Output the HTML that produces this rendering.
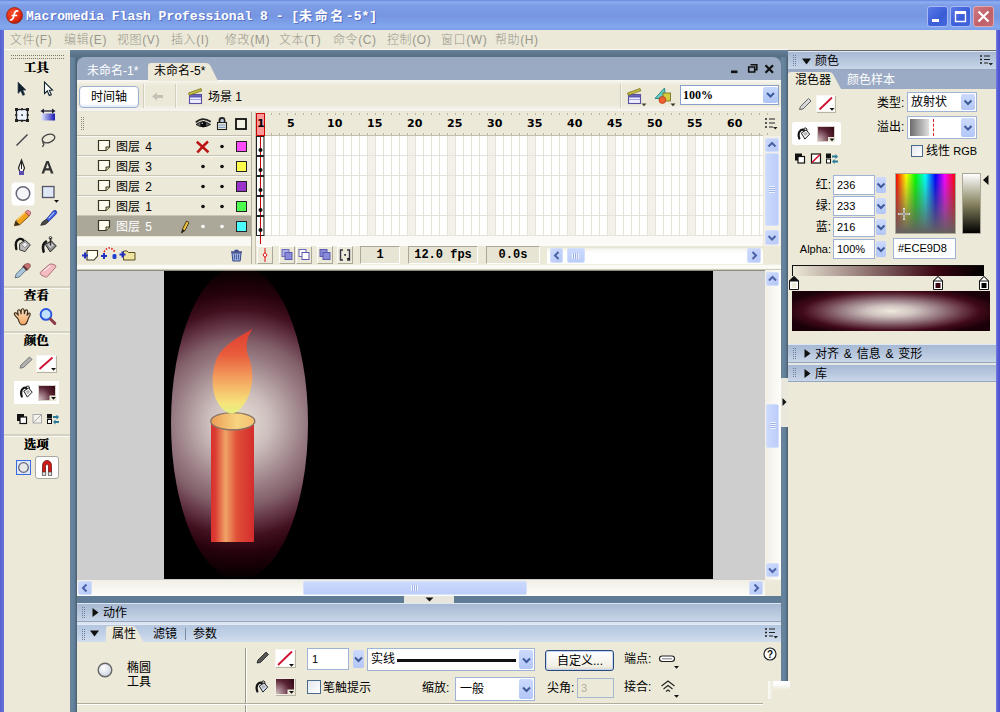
<!DOCTYPE html>
<html lang="zh">
<head>
<meta charset="utf-8">
<title>Macromedia Flash Professional 8</title>
<style>
*{box-sizing:border-box;margin:0;padding:0}
html,body{width:1000px;height:712px;overflow:hidden;background:#ece9d8}
body{position:relative;font-family:"Liberation Sans","Noto Sans CJK SC",sans-serif;font-size:12px;color:#000;line-height:1}
.a{position:absolute}
.t{position:absolute;white-space:nowrap;line-height:14px;height:14px}
svg{position:absolute;overflow:visible}
/* title */
#title{left:0;top:0;width:1000px;height:30px;background:linear-gradient(#6585dc 0,#8eaef3 2px,#7d9de6 5px,#7796e1 16px,#7c9fe8 22px,#82a8ee 27px,#7a9de8 30px)}
#ttext{left:26px;top:9px;color:#fff;font-family:"Liberation Mono","Noto Sans CJK SC",monospace;font-weight:bold;font-size:13px;line-height:16px;height:16px;text-shadow:1px 1px 0 #5570c4}
.wb{position:absolute;top:6px;width:21px;height:21px;border:1px solid #fff;border-radius:3px}
#menu{left:4px;top:30px;width:992px;height:20px;background:#ece9d8}
#menu span{position:absolute;top:3px;line-height:14px;color:#99978c;white-space:nowrap;letter-spacing:.6px;font-weight:300}
#lb{left:0;top:30px;width:4px;height:682px;background:linear-gradient(90deg,#5660cf,#6474da)}
#rb{left:996px;top:30px;width:4px;height:682px;background:linear-gradient(90deg,#7484e2 0,#5a60d6 1.500px,#4c50d0 4px)}
/* tools */
#tools{left:4px;top:50px;width:66px;height:662px;background:#ece9d8}
.th{position:absolute;left:0;width:66px;text-align:center;font-weight:bold;font-size:12.5px;line-height:14px;font-family:"Liberation Serif","Noto Serif CJK SC",serif;text-shadow:.6px 0 0 #000;letter-spacing:0;padding-right:2px}
.sep{position:absolute;left:6px;width:62px;height:3px;background:#d6d2c3;border-bottom:1px solid #f8f7f0}
/* doc frame */
#frame{left:70px;top:50px;width:718px;height:662px;background:linear-gradient(#6a849b 0,#5e788f 3px,#566f85 7px,#607b95 12px)}
#tabs{left:77px;top:57px;width:704px;height:24px;background:#9aaac3;border-radius:8px 8px 0 0}
#editbar{left:77px;top:80px;width:704px;height:32px;background:linear-gradient(#f9f8f3 0,#f1efe4 3px,#ece9d8 6px,#ece9d8 25px,#f3f1e8 28px,#f6f5ee 31px,#d9d5c6 32px)}
</style>
</head>
<body>
<div class="a" id="title"></div>
<div class="t" id="ttext">Macromedia Flash Professional 8 - [<span style="letter-spacing:2.6px">未命名</span>-5*]</div>
<div class="a" id="lb"></div><div class="a" id="rb"></div>
<div class="a" id="menu">
<span style="left:6px">文件(F)</span><span style="left:60px">编辑(E)</span><span style="left:113px">视图(V)</span><span style="left:167px">插入(I)</span><span style="left:221px">修改(M)</span><span style="left:275px">文本(T)</span><span style="left:329px">命令(C)</span><span style="left:383px">控制(O)</span><span style="left:437px">窗口(W)</span><span style="left:491px">帮助(H)</span>
</div>
<div class="a" id="tools"></div>
<div class="a" style="left:4px;top:49px;width:784px;height:1px;background:#fbfaf5"></div>
<div class="a" id="frame"></div>
<div class="a" style="left:70px;top:57px;width:7px;height:655px;background:linear-gradient(90deg,#6b8197 0,#67859f 30%,#607d98 65%,#4b5d6d 100%)"></div>
<div class="a" style="left:781px;top:57px;width:7px;height:655px;background:linear-gradient(90deg,#6b8197 0,#67859f 30%,#607d98 65%,#4b5d6d 100%)"></div>
<div class="a" id="tabs"></div>
<div class="a" id="editbar"></div>
<!-- TOOLS -->
<div class="a" style="left:11px;top:55px;width:54px;height:5px;background-image:radial-gradient(circle at 0.5px 0.5px,#7a7768 0.65px,transparent 0.8px);background-size:2px 3px"></div>
<div class="th" style="left:4px;top:61px">工具</div>
<div class="a" style="left:12px;top:183px;width:22px;height:22px;background:#fff;border-radius:3px;box-shadow:0 0 0 1px #f4f2ea"></div>
<svg width="70" height="500" viewBox="0 0 70 500" style="left:0;top:0">
<!-- arrow -->
<path d="M18 82 L18 93.5 L20.8 91 L22.8 95.5 L24.8 94.6 L22.8 90.2 L26 90 Z" fill="#10202c" stroke="#3a4a5a" stroke-width=".6"/>
<path d="M44.5 82 L44.5 93.5 L47.3 91 L49.3 95.5 L51.3 94.6 L49.3 90.2 L52.5 90 Z" fill="#fff" stroke="#10202c" stroke-width="1.1"/>
<!-- free transform -->
<rect x="16.5" y="109.5" width="11" height="11" fill="#eef4ff" stroke="#222" stroke-width="1.3"/>
<g fill="#222"><rect x="15" y="108" width="3" height="3"/><rect x="26" y="108" width="3" height="3"/><rect x="15" y="119" width="3" height="3"/><rect x="26" y="119" width="3" height="3"/><rect x="21.3" y="114.3" width="1.6" height="1.6"/><rect x="21" y="108.200" width="2" height="2"/><rect x="21" y="119.800" width="2" height="2"/><rect x="15.200" y="114" width="2" height="2"/><rect x="26.800" y="114" width="2" height="2"/></g>
<!-- fill transform -->
<defs><linearGradient id="gft" x1="0" x2="1"><stop offset="0" stop-color="#e8ecff"/><stop offset="1" stop-color="#1818b0"/></linearGradient>
<linearGradient id="gpen" x1="0" x2="1" y1="0" y2="1"><stop offset="0" stop-color="#e44"/><stop offset=".3" stop-color="#f5a623"/><stop offset="1" stop-color="#e88a10"/></linearGradient></defs>
<rect x="41" y="113.500" width="14" height="7" fill="url(#gft)"/>
<path d="M42 111 H54" stroke="#223" stroke-width="1.3"/><path d="M40.500 111 l3.500 -2.600 v5.200 z M55.500 111 l-3.500 -2.600 v5.200 z" fill="#223"/>
<!-- line -->
<path d="M16.5 145.5 L27.5 134.5" stroke="#444" stroke-width="1.5"/>
<!-- lasso -->
<ellipse cx="48.500" cy="138.500" rx="6.500" ry="4" fill="none" stroke="#444" stroke-width="1.3" transform="rotate(-18 48.500 138.500)"/>
<path d="M43.500 141 q-1.500 2 .5 3 l-1.500 3" fill="none" stroke="#444" stroke-width="1.300"/>
<!-- pen -->
<path d="M21.500 160 L18.500 168 L20 172 H23 L24.500 168 Z" fill="#fff" stroke="#222" stroke-width="1.200"/>
<path d="M21.500 161 V169" stroke="#222" stroke-width="1"/>
<rect x="19" y="171" width="5" height="4" fill="#5a4fb0"/>
<!-- A -->
<path d="M41.500 173.500 L46.300 161 H48.700 L53.500 173.500 H50.900 L49.900 170.500 H45.100 L44.100 173.500 Z M45.900 168.300 H49.100 L47.500 163.600 Z" fill="#333"/>
<!-- oval -->
<circle cx="23" cy="193.500" r="6.800" fill="#f4f6fa" stroke="#667" stroke-width="1.500"/>
<!-- rect -->
<rect x="42.500" y="186.500" width="11.500" height="11" fill="#dfe6f4" stroke="#556" stroke-width="1.300"/>
<path d="M54 200 h5 l-2.500 2.800 z" fill="#111"/>
<!-- pencil -->
<path d="M14.300 225.800 L15.800 220.800 L25.300 212 L29.300 216 L19.800 224.800 Z" fill="#f2a31c" stroke="#6a4210" stroke-width=".8"/>
<path d="M17 219.700 L26.200 211.200" stroke="#fbd27a" stroke-width="1.200"/>
<path d="M25.300 212 L27 210.600 Q29.500 210 30.600 212.200 Q30.800 214 29.300 216 Z" fill="#e88e92" stroke="#9a4048" stroke-width=".7"/>
<path d="M14.300 225.800 L15.800 220.800 L19.800 224.800 Z" fill="#3a3020"/>
<!-- brush -->
<path d="M46.300 219.300 L53 211.300 Q55 209.600 56.300 211 Q57.300 212.600 55.800 214.300 L48.600 221.600 Z" fill="#3858e0" stroke="#1c309a" stroke-width=".8"/>
<path d="M48.600 218.300 L54.300 212.300" stroke="#b8c8ff" stroke-width="1.100"/>
<path d="M40.700 225.300 Q41.500 221.300 46.300 219.300 L48.600 221.600 Q46.500 225.300 40.700 225.300 Z" fill="#4a4a4a" stroke="#2a2a2a" stroke-width=".7"/>
<!-- ink bottle -->
<path d="M16.300 249 Q14.300 241 19.300 239 Q22.300 238.300 23.600 240.600" fill="none" stroke="#151515" stroke-width="2.400" stroke-linecap="round"/>
<path d="M19.600 243.800 L25.300 240.300 L30.300 244.800 L25 251.600 L19.600 249.800 Z" fill="#b8b8b8" stroke="#3a3a3a" stroke-width="1"/>
<path d="M21.600 244.300 L25.100 242.100 L28.100 244.800 L24.600 247.600 Z" fill="#ececec" stroke="#666" stroke-width=".6"/>
<!-- paint bucket -->
<path d="M43.600 251.600 Q41.600 244.300 46 241.600" fill="none" stroke="#151515" stroke-width="2.600" stroke-linecap="round"/>
<path d="M45.300 244.300 L51.300 240.800 L56.300 246 L50.300 252 Z" fill="#8a8a8a" stroke="#2a2a2a" stroke-width="1"/>
<path d="M47.300 244.600 L51 242.500 L54 245.600 L50.300 248.300 Z" fill="#c4c4c4"/>
<path d="M50.500 245.500 V238" stroke="#2a2a2a" stroke-width="1.400"/><circle cx="50.500" cy="238" r="1.400" fill="none" stroke="#333" stroke-width=".9"/>
<!-- eyedropper -->
<path d="M15 277.800 L16.300 274 L23.600 266.600 L26.600 269.600 L19.300 277 Z" fill="#a9c8dc" stroke="#4a5a6a" stroke-width=".8"/>
<path d="M22.300 266.600 L26.800 271 L28 269.600 L23.600 265.300 Z" fill="#5a2a2a"/>
<path d="M24 265 L28.300 269.300 L30.300 266.600 Q30.800 264 28.600 263.500 Q26.300 263.300 24 265 Z" fill="#cc7474" stroke="#7a3a3a" stroke-width=".7"/>
<!-- eraser -->
<path d="M40.300 273.600 Q40 272.600 41.300 271.300 L49.300 264.600 Q50.600 263.600 52 264 L55.300 265.300 Q56.300 266 55.600 267.300 L47.600 276.300 Q46.600 277.500 45.300 277 L41.300 275 Q40.500 274.600 40.300 273.600 Z" fill="#f4bcc0" stroke="#a4646c" stroke-width=".9"/>
<path d="M44 271 L50 266" stroke="#fde4e6" stroke-width="1.200"/>
</svg>
<div class="sep" style="left:4px;top:286px;width:66px"></div>
<div class="th" style="left:4px;top:289px">查看</div>
<div class="sep" style="left:4px;top:331px;width:66px"></div>
<div class="th" style="left:4px;top:334px">颜色</div>
<div class="a" style="left:36px;top:355px;width:20px;height:17px;background:#fff;border:1px solid #f8f6ee;box-shadow:1px 1px 0 #b8b4a4"></div>
<div class="a" style="left:14px;top:381px;width:45px;height:23px;background:#fff"></div>
<div class="a" style="left:38px;top:385px;width:18px;height:16px;background:radial-gradient(circle at 0% 100%,#d4c4c4 0,#9a7480 30%,#5a2434 60%,#2e0612 100%);border:1px solid #d8d4c8"></div>
<div class="sep" style="left:4px;top:434px;width:66px"></div>
<div class="th" style="left:4px;top:438px">选项</div>
<div class="a" style="left:16px;top:460px;width:15px;height:15px;background:#dfe8f8;border:1px solid #3a6ae0"></div>
<div class="a" style="left:35px;top:456px;width:24px;height:23px;background:#fff;border:1px solid #a8a8a0;border-radius:3px"></div>
<svg width="70" height="200" viewBox="0 300 70 200" style="left:0;top:300px">
<!-- hand -->
<defs><linearGradient id="hnd" x1="0" y1="0" x2="0" y2="1"><stop offset="0" stop-color="#fde8cc"/><stop offset="1" stop-color="#f2a25c"/></linearGradient></defs>
<path d="M17.800 318.500 Q15 316 14.300 314 Q14.300 312.600 15.800 312.800 Q17.300 313.600 18.300 315.300 L17.600 311 Q17.800 309.600 19.200 309.800 Q20.300 310.300 20.500 311.600 L21.100 314 L21.300 310 Q21.600 308.600 23 308.800 Q24.100 309.300 24.200 310.600 L24.300 313.800 L25.300 310.600 Q25.900 309.600 27 310 Q27.800 310.600 27.600 311.800 L27 315.300 L28.600 313.300 Q29.600 312.800 30.100 313.600 Q30.400 314.600 29.800 315.600 Q28 319 27.300 321.500 Q26.600 324 24.600 324.800 H21.300 Q19.300 323.500 18.800 321 Q18.600 319.600 17.800 318.500 Z" fill="url(#hnd)" stroke="#3a2a1a" stroke-width="1.100" stroke-linejoin="round"/>
<!-- zoom -->
<circle cx="46" cy="314.400" r="5.400" fill="#bfe2ff" stroke="#2a56dc" stroke-width="1.900"/>
<path d="M50.600 319.200 L54.800 323.400" stroke="#8a3c48" stroke-width="3" stroke-linecap="round"/>
<!-- grey pencil -->
<path d="M20 368.200 L21 365 L29.500 357 L32 359.500 L23.500 367.500 Z" fill="#b0b0b0" stroke="#666" stroke-width=".8"/>
<!-- stroke swatch -->
<path d="M39.500 369 L52.500 357.500" stroke="#d01030" stroke-width="1.800"/>
<path d="M51 368 h5 l-2.500 2.800 z" fill="#111"/>
<!-- fill bucket -->
<path d="M21.8 396.5 Q19.8 390.5 23.5 388.1 Q25.5 387.1 26.5 388.5" fill="none" stroke="#151515" stroke-width="2.200" stroke-linecap="round"/><path d="M23.8 391.1 L28.6 387.9 L32.2 392.1 L27.4 397.1 Z" fill="#f4f4f4" stroke="#222" stroke-width="1"/><path d="M25.6 391.5 L28.4 389.7 L30.4 392.1 L27.6 394.1 Z" fill="#b8b8b8"/><path d="M25.8 389.1 Q26.2 385.1 28.4 385.9 Q29.8 386.7 29.4 388.9" fill="none" stroke="#222" stroke-width="1"/>
<rect x="49.500" y="395.500" width="7" height="5.500" fill="#ece9d8"/><path d="M51 397 h5 l-2.500 2.800 z" fill="#111"/>
<!-- small 3 -->
<rect x="17" y="414" width="7" height="7" fill="#111"/><rect x="20" y="417" width="6.500" height="6.500" fill="#fff" stroke="#111" stroke-width="1.200"/>
<rect x="33" y="414.500" width="8.500" height="8.500" fill="#f4f2ea" stroke="#aaa" stroke-width="1"/><path d="M33.500 422.500 L41 415" stroke="#aaa" stroke-width="1"/>
<rect x="47" y="414" width="5" height="4.500" fill="#111"/><rect x="47.500" y="419.500" width="4" height="4" fill="#fff" stroke="#111" stroke-width="1"/>
<path d="M53 416 h3.500 v-1.500 l2.500 2.500 -2.500 2.500 v-1.500 h-3.500 z M59 421 h-3.500 v-1.500 l-2.500 2.500 2.500 2.500 v-1.500 h3.500 z" fill="#2a7a9a"/>
<!-- options -->
<circle cx="23.500" cy="467.500" r="4.800" fill="#e8e8e8" stroke="#667" stroke-width="1.300"/>
<path d="M42.500 475 V466.500 Q42.500 460.500 47 460.500 Q51.500 460.500 51.500 466.500 V475 H48.500 V466.500 Q48.500 464 47 464 Q45.500 464 45.500 466.500 V475 Z" fill="#d01818" stroke="#701010" stroke-width=".8"/>
<rect x="42.200" y="472" width="3.600" height="3.500" fill="#ddd" stroke="#444" stroke-width=".6"/><rect x="48.200" y="472" width="3.600" height="3.500" fill="#ddd" stroke="#444" stroke-width=".6"/>
</svg>

<!--TL-->
<div class="t" style="left:87px;top:64px;color:#fff">未命名-1*</div>
<svg width="80" height="20" viewBox="146 62 80 20" style="left:146px;top:62px"><path d="M148 81 V66 Q148 63 151 63 H206 Q209 63 210.500 66 L218 81 Z" fill="#ece9d8"/></svg>
<div class="t" style="left:154px;top:64px">未命名-5*</div>
<svg width="50" height="14" viewBox="728 62 50 14" style="left:728px;top:62px"><rect x="731" y="70.500" width="6.500" height="2.600" fill="#111"/><path d="M750.500 64.800 h6.300 v5 h-2 M748.700 67 h6 v5 h-6 z" fill="none" stroke="#111" stroke-width="1.600"/><path d="M765.500 65.300 l7.500 7.500 m0 -7.500 l-7.500 7.500" stroke="#111" stroke-width="2.200"/></svg>
<div class="a" style="left:79px;top:86px;width:60px;height:22px;background:#fff;border:1px solid #9ab0d0;border-radius:4px;box-shadow:inset 0 -2px 2px #e4ecf8"></div>
<div class="t" style="left:91px;top:90px;font-size:12px">时间轴</div>
<div class="a" style="left:143px;top:84px;width:2px;height:24px;border-left:1px solid #d2cebe;border-right:1px solid #f7f6ef"></div>
<div class="a" style="left:175px;top:84px;width:2px;height:24px;border-left:1px solid #d2cebe;border-right:1px solid #f7f6ef"></div>
<div class="a" style="left:620px;top:84px;width:2px;height:24px;border-left:1px solid #d2cebe;border-right:1px solid #f7f6ef"></div>
<svg width="20" height="12" viewBox="150 90 20 12" style="left:150px;top:90px"><path d="M152 96.500 l5 -4 v2.500 h6 v3 h-6 v2.500 z" fill="#c4c0b4"/></svg>
<svg width="20" height="20" viewBox="186 86 20 20" style="left:186px;top:86px"><rect x="189.500" y="94.500" width="12" height="9" fill="#eeeeff" stroke="#5a4fa0" stroke-width="1.100"/><path d="M190 96.300 h11" stroke="#5c58b4" stroke-width="2.400"/><path d="M190 99.500 h11" stroke="#a8a4e0" stroke-width="1"/><path d="M188.500 93 L201 88.500 L201.800 90.800 L189.300 95.300 Z" fill="#c8c040" stroke="#7a7420" stroke-width=".8"/></svg>
<div class="t" style="left:208px;top:90px">场景 1</div>
<svg width="20" height="22" viewBox="626 86 20 22" style="left:626px;top:86px"><rect x="628.500" y="94.500" width="12" height="9" fill="#eeeeff" stroke="#5a4fa0" stroke-width="1.100"/><path d="M629 96.300 h11" stroke="#5c58b4" stroke-width="2.400"/><path d="M629 99.500 h11" stroke="#a8a4e0" stroke-width="1"/><path d="M627.500 93 L640 88.500 L640.800 90.800 L628.300 95.300 Z" fill="#c8c040" stroke="#7a7420" stroke-width=".8"/><path d="M641.500 103.500 h5 l-2.500 2.800 z" fill="#443"/></svg>
<svg width="24" height="22" viewBox="652 86 24 22" style="left:652px;top:86px"><path d="M655 98.500 L664.500 88 L665.500 98.500 Z" fill="#62ccc4" stroke="#2a8a88" stroke-width="1"/><rect x="663" y="93" width="7.500" height="8" fill="#d4cc40" stroke="#7a7420" stroke-width=".9"/><circle cx="662.400" cy="100" r="3.400" fill="#f06030" stroke="#b03a14" stroke-width=".8"/><path d="M670.500 103.500 h5 l-2.500 2.800 z" fill="#332"/></svg>
<div class="a" style="left:680px;top:85px;width:99px;height:20px;background:#fff;border:1px solid #8aa0c8"></div>
<div class="a" style="left:763px;top:87px;width:15px;height:16px;background:linear-gradient(#c8d8fc,#aec4f4);border-radius:2px"></div>
<svg width="15" height="16" viewBox="0 0 15 16" style="left:763px;top:87px"><path d="M4 6 l3.500 3.500 l3.500 -3.500" fill="none" stroke="#3a5a9a" stroke-width="2"/></svg>
<div class="t" style="left:683px;top:88px;font-weight:bold;font-size:11px;font-family:'Liberation Serif',serif;font-size:12px">100%</div>

<div class="a" style="left:77px;top:112px;width:704px;height:158px;background:#ece9d8"></div>
<div class="a" style="left:77px;top:135px;width:686px;height:1px;background:#c2beae"></div>
<div class="a" style="left:77px;top:136px;width:174px;height:20px;background:#ece9d8;border-bottom:1px solid #c9c5b4;border-top:1px solid #f8f7f0"></div>
<div class="t" style="left:116px;top:140px;color:#000;word-spacing:2px">图层 4</div>
<div class="a" style="left:236px;top:141px;width:11px;height:11px;background:#ff4cff;border:1px solid #222"></div>
<div class="a" style="left:77px;top:156px;width:174px;height:20px;background:#ece9d8;border-bottom:1px solid #c9c5b4;border-top:1px solid #f8f7f0"></div>
<div class="t" style="left:116px;top:160px;color:#000;word-spacing:2px">图层 3</div>
<div class="a" style="left:236px;top:161px;width:11px;height:11px;background:#ffff4c;border:1px solid #222"></div>
<div class="a" style="left:77px;top:176px;width:174px;height:20px;background:#ece9d8;border-bottom:1px solid #c9c5b4;border-top:1px solid #f8f7f0"></div>
<div class="t" style="left:116px;top:180px;color:#000;word-spacing:2px">图层 2</div>
<div class="a" style="left:236px;top:181px;width:11px;height:11px;background:#9933cc;border:1px solid #222"></div>
<div class="a" style="left:77px;top:196px;width:174px;height:20px;background:#ece9d8;border-bottom:1px solid #c9c5b4;border-top:1px solid #f8f7f0"></div>
<div class="t" style="left:116px;top:200px;color:#000;word-spacing:2px">图层 1</div>
<div class="a" style="left:236px;top:201px;width:11px;height:11px;background:#4cff4c;border:1px solid #222"></div>
<div class="a" style="left:77px;top:216px;width:174px;height:20px;background:#aca899;border-bottom:1px solid #aca899;border-top:1px solid #aca899"></div>
<div class="t" style="left:116px;top:220px;color:#fff;word-spacing:2px">图层 5</div>
<div class="a" style="left:236px;top:221px;width:11px;height:11px;background:#4cffff;border:1px solid #222"></div>
<div class="a" style="left:81px;top:117px;width:4px;height:14px;background-image:radial-gradient(circle at 0.5px 0.5px,#8a8778 0.6px,transparent 0.7px);background-size:2px 2px"></div>
<div class="a" style="left:251px;top:112px;width:5px;height:158px;background:#ece9d8;border-left:1px solid #b4b0a0;border-right:1px solid #c8c4b4"></div>
<div class="a" style="left:256px;top:136px;width:507px;height:100px;background-color:#fff;background-image:linear-gradient(90deg,rgba(0,0,0,0) 0,rgba(0,0,0,0) 7px,#e5e2d9 7px,#e5e2d9 8px),linear-gradient(transparent 0,transparent 19px,#e5e2d9 19px,#e5e2d9 20px),linear-gradient(90deg,transparent 0,transparent 32px,#f4f1ea 32px,#f4f1ea 40px);background-size:8px 20px,8px 20px,40px 20px;background-blend-mode:normal"></div>
<div class="a" style="left:256px;top:236px;width:507px;height:10px;background:#fbfaf6"></div>
<div class="a" style="left:77px;top:237px;width:174px;height:9px;background:#faf8f3"></div>
<!--/TL-->
<!--TL2-->
<svg width="703" height="160" viewBox="77 112 703 160" style="left:77px;top:112px">
<path d="M196 124.500 Q203 119 210.500 124.500 Q203 129 196 124.500 Z" fill="#6a6a6a" stroke="#1a1a1a" stroke-width="1"/><circle cx="203.300" cy="124.300" r="3" fill="#0a0a0a"/><circle cx="202.300" cy="123.300" r=".8" fill="#ccc"/><path d="M195.800 122.300 Q202.500 116 210.800 121.800" fill="none" stroke="#222" stroke-width="1.700"/>
<path d="M219.500 123 V120.500 Q219.500 118 222 118 Q224.500 118 224.500 120.500 V123" fill="none" stroke="#222" stroke-width="1.900"/><rect x="217.500" y="122.500" width="9" height="7" fill="#eef0dc" stroke="#222" stroke-width="1.100"/><path d="M218.500 125 h7 M218.500 127.300 h7" stroke="#6a8cc4" stroke-width="1"/><rect x="221" y="119.300" width="2.600" height="2.400" fill="#b8c8e8"/>
<rect x="236" y="119" width="10" height="10" fill="#f4f2e6" stroke="#111" stroke-width="1.800"/>
<path d="M98.500 140.5 H109.500 V147 L106 150.5 H98.500 Z" fill="#fffef0" stroke="#3a3420" stroke-width="1.200"/><path d="M109.500 147 H106 V150.5" fill="#e8e0a8" stroke="#3a3420" stroke-width="1"/>
<path d="M196.800 141.800 L208.500 152.300 M208 141.500 Q202 147 197.300 152.500" stroke="#bb1414" stroke-width="2.500" fill="none"/>
<circle cx="222" cy="146.5" r="1.800" fill="#111"/>
<path d="M98.500 160.5 H109.500 V167 L106 170.5 H98.500 Z" fill="#fffef0" stroke="#3a3420" stroke-width="1.200"/><path d="M109.500 167 H106 V170.5" fill="#e8e0a8" stroke="#3a3420" stroke-width="1"/>
<circle cx="203" cy="166.5" r="1.800" fill="#111"/>
<circle cx="222" cy="166.5" r="1.800" fill="#111"/>
<path d="M98.500 180.5 H109.500 V187 L106 190.5 H98.500 Z" fill="#fffef0" stroke="#3a3420" stroke-width="1.200"/><path d="M109.500 187 H106 V190.5" fill="#e8e0a8" stroke="#3a3420" stroke-width="1"/>
<circle cx="203" cy="186.5" r="1.800" fill="#111"/>
<circle cx="222" cy="186.5" r="1.800" fill="#111"/>
<path d="M98.500 200.5 H109.500 V207 L106 210.5 H98.500 Z" fill="#fffef0" stroke="#3a3420" stroke-width="1.200"/><path d="M109.500 207 H106 V210.5" fill="#e8e0a8" stroke="#3a3420" stroke-width="1"/>
<circle cx="203" cy="206.5" r="1.800" fill="#111"/>
<circle cx="222" cy="206.5" r="1.800" fill="#111"/>
<path d="M98.500 220.5 H109.500 V227 L106 230.5 H98.500 Z" fill="#fffef0" stroke="#3a3420" stroke-width="1.200"/><path d="M109.500 227 H106 V230.5" fill="#e8e0a8" stroke="#3a3420" stroke-width="1"/>
<circle cx="203" cy="226.5" r="1.800" fill="#fff"/>
<circle cx="222" cy="226.5" r="1.800" fill="#fff"/>
<path d="M181.500 233 L182.500 229 L186.500 221 L189 222.5 L185 230.5 Z" fill="#f0c040" stroke="#3a3010" stroke-width=".9"/><path d="M181.500 233 L182.500 229 L185 230.5 Z" fill="#222"/>
<path d="M263.5 113 v2 M263.5 133 v2" stroke="#b8b4a4" stroke-width="1"/>
<path d="M271.5 113 v2 M271.5 133 v2" stroke="#b8b4a4" stroke-width="1"/>
<path d="M279.5 113 v2 M279.5 133 v2" stroke="#b8b4a4" stroke-width="1"/>
<path d="M287.5 113 v2 M287.5 133 v2" stroke="#b8b4a4" stroke-width="1"/>
<path d="M295.5 113 v2 M295.5 133 v2" stroke="#b8b4a4" stroke-width="1"/>
<path d="M303.5 113 v2 M303.5 133 v2" stroke="#b8b4a4" stroke-width="1"/>
<path d="M311.5 113 v2 M311.5 133 v2" stroke="#b8b4a4" stroke-width="1"/>
<path d="M319.5 113 v2 M319.5 133 v2" stroke="#b8b4a4" stroke-width="1"/>
<path d="M327.5 113 v2 M327.5 133 v2" stroke="#b8b4a4" stroke-width="1"/>
<path d="M335.5 113 v2 M335.5 133 v2" stroke="#b8b4a4" stroke-width="1"/>
<path d="M343.5 113 v2 M343.5 133 v2" stroke="#b8b4a4" stroke-width="1"/>
<path d="M351.5 113 v2 M351.5 133 v2" stroke="#b8b4a4" stroke-width="1"/>
<path d="M359.5 113 v2 M359.5 133 v2" stroke="#b8b4a4" stroke-width="1"/>
<path d="M367.5 113 v2 M367.5 133 v2" stroke="#b8b4a4" stroke-width="1"/>
<path d="M375.5 113 v2 M375.5 133 v2" stroke="#b8b4a4" stroke-width="1"/>
<path d="M383.5 113 v2 M383.5 133 v2" stroke="#b8b4a4" stroke-width="1"/>
<path d="M391.5 113 v2 M391.5 133 v2" stroke="#b8b4a4" stroke-width="1"/>
<path d="M399.5 113 v2 M399.5 133 v2" stroke="#b8b4a4" stroke-width="1"/>
<path d="M407.5 113 v2 M407.5 133 v2" stroke="#b8b4a4" stroke-width="1"/>
<path d="M415.5 113 v2 M415.5 133 v2" stroke="#b8b4a4" stroke-width="1"/>
<path d="M423.5 113 v2 M423.5 133 v2" stroke="#b8b4a4" stroke-width="1"/>
<path d="M431.5 113 v2 M431.5 133 v2" stroke="#b8b4a4" stroke-width="1"/>
<path d="M439.5 113 v2 M439.5 133 v2" stroke="#b8b4a4" stroke-width="1"/>
<path d="M447.5 113 v2 M447.5 133 v2" stroke="#b8b4a4" stroke-width="1"/>
<path d="M455.5 113 v2 M455.5 133 v2" stroke="#b8b4a4" stroke-width="1"/>
<path d="M463.5 113 v2 M463.5 133 v2" stroke="#b8b4a4" stroke-width="1"/>
<path d="M471.5 113 v2 M471.5 133 v2" stroke="#b8b4a4" stroke-width="1"/>
<path d="M479.5 113 v2 M479.5 133 v2" stroke="#b8b4a4" stroke-width="1"/>
<path d="M487.5 113 v2 M487.5 133 v2" stroke="#b8b4a4" stroke-width="1"/>
<path d="M495.5 113 v2 M495.5 133 v2" stroke="#b8b4a4" stroke-width="1"/>
<path d="M503.5 113 v2 M503.5 133 v2" stroke="#b8b4a4" stroke-width="1"/>
<path d="M511.5 113 v2 M511.5 133 v2" stroke="#b8b4a4" stroke-width="1"/>
<path d="M519.5 113 v2 M519.5 133 v2" stroke="#b8b4a4" stroke-width="1"/>
<path d="M527.5 113 v2 M527.5 133 v2" stroke="#b8b4a4" stroke-width="1"/>
<path d="M535.5 113 v2 M535.5 133 v2" stroke="#b8b4a4" stroke-width="1"/>
<path d="M543.5 113 v2 M543.5 133 v2" stroke="#b8b4a4" stroke-width="1"/>
<path d="M551.5 113 v2 M551.5 133 v2" stroke="#b8b4a4" stroke-width="1"/>
<path d="M559.5 113 v2 M559.5 133 v2" stroke="#b8b4a4" stroke-width="1"/>
<path d="M567.5 113 v2 M567.5 133 v2" stroke="#b8b4a4" stroke-width="1"/>
<path d="M575.5 113 v2 M575.5 133 v2" stroke="#b8b4a4" stroke-width="1"/>
<path d="M583.5 113 v2 M583.5 133 v2" stroke="#b8b4a4" stroke-width="1"/>
<path d="M591.5 113 v2 M591.5 133 v2" stroke="#b8b4a4" stroke-width="1"/>
<path d="M599.5 113 v2 M599.5 133 v2" stroke="#b8b4a4" stroke-width="1"/>
<path d="M607.5 113 v2 M607.5 133 v2" stroke="#b8b4a4" stroke-width="1"/>
<path d="M615.5 113 v2 M615.5 133 v2" stroke="#b8b4a4" stroke-width="1"/>
<path d="M623.5 113 v2 M623.5 133 v2" stroke="#b8b4a4" stroke-width="1"/>
<path d="M631.5 113 v2 M631.5 133 v2" stroke="#b8b4a4" stroke-width="1"/>
<path d="M639.5 113 v2 M639.5 133 v2" stroke="#b8b4a4" stroke-width="1"/>
<path d="M647.5 113 v2 M647.5 133 v2" stroke="#b8b4a4" stroke-width="1"/>
<path d="M655.5 113 v2 M655.5 133 v2" stroke="#b8b4a4" stroke-width="1"/>
<path d="M663.5 113 v2 M663.5 133 v2" stroke="#b8b4a4" stroke-width="1"/>
<path d="M671.5 113 v2 M671.5 133 v2" stroke="#b8b4a4" stroke-width="1"/>
<path d="M679.5 113 v2 M679.5 133 v2" stroke="#b8b4a4" stroke-width="1"/>
<path d="M687.5 113 v2 M687.5 133 v2" stroke="#b8b4a4" stroke-width="1"/>
<path d="M695.5 113 v2 M695.5 133 v2" stroke="#b8b4a4" stroke-width="1"/>
<path d="M703.5 113 v2 M703.5 133 v2" stroke="#b8b4a4" stroke-width="1"/>
<path d="M711.5 113 v2 M711.5 133 v2" stroke="#b8b4a4" stroke-width="1"/>
<path d="M719.5 113 v2 M719.5 133 v2" stroke="#b8b4a4" stroke-width="1"/>
<path d="M727.5 113 v2 M727.5 133 v2" stroke="#b8b4a4" stroke-width="1"/>
<path d="M735.5 113 v2 M735.5 133 v2" stroke="#b8b4a4" stroke-width="1"/>
<path d="M743.5 113 v2 M743.5 133 v2" stroke="#b8b4a4" stroke-width="1"/>
<path d="M751.5 113 v2 M751.5 133 v2" stroke="#b8b4a4" stroke-width="1"/>
<path d="M759.5 113 v2 M759.5 133 v2" stroke="#b8b4a4" stroke-width="1"/>
<path d="M767.5 113 v2 M767.5 133 v2" stroke="#b8b4a4" stroke-width="1"/>
<rect x="256.500" y="113.500" width="8" height="22" fill="#ff9999" stroke="#cc0000" stroke-width="1"/>
<path d="M260.500 136 V244" stroke="#cc0000" stroke-width="1"/>
<rect x="256.500" y="136.5" width="7.500" height="19" fill="none" stroke="#222" stroke-width="1"/>
<circle cx="260.500" cy="150" r="2" fill="#111"/>
<rect x="256.500" y="156.5" width="7.500" height="19" fill="none" stroke="#222" stroke-width="1"/>
<circle cx="260.500" cy="170" r="2" fill="#111"/>
<rect x="256.500" y="176.5" width="7.500" height="19" fill="none" stroke="#222" stroke-width="1"/>
<circle cx="260.500" cy="190" r="2" fill="#111"/>
<rect x="256.500" y="196.5" width="7.500" height="19" fill="none" stroke="#222" stroke-width="1"/>
<circle cx="260.500" cy="210" r="2" fill="#111"/>
<rect x="256.500" y="216.5" width="7.500" height="19" fill="none" stroke="#222" stroke-width="1"/>
<circle cx="260.500" cy="230" r="2" fill="#111"/>
<path d="M765 119 h2 M765 123 h2 M765 127 h2" stroke="#222" stroke-width="1.600"/><path d="M769 119 h6 M769 123 h6 M769 127 h4" stroke="#222" stroke-width="1.200"/><path d="M773 127 h4.500 l-2.250 2.500 z" fill="#222"/>
<path d="M87 250.500 H97.500 V256 L94 260 H87 Z" fill="#fffef0" stroke="#3a3420" stroke-width="1.100"/><path d="M82 255.500 h6 M85 252.500 v6" stroke="#2030c0" stroke-width="2"/>
<path d="M104 252 Q109 244 115 252" fill="none" stroke="#e01010" stroke-width="1.600" stroke-dasharray="1.500 1.500"/><path d="M101 256 h6 M104 253 v6" stroke="#2030c0" stroke-width="2"/><rect x="112.500" y="254" width="4" height="5" rx="1.500" fill="#2040d0"/>
<path d="M123.500 260 V251 H127 L128.500 252.500 H135 V260 Z" fill="#f0e4a0" stroke="#5a5020" stroke-width="1"/><path d="M119.500 254.500 h6 M122.500 251.500 v6" stroke="#2030c0" stroke-width="2"/>
<path d="M232 253 h9 l-.8 8 h-7.400 z" fill="#9ab0e0" stroke="#3a4a8a" stroke-width="1"/><path d="M231 252 h11 M234.500 250.500 h4" stroke="#3a4a8a" stroke-width="1.400"/><path d="M234.500 254.500 v5 M236.500 254.500 v5 M238.500 254.500 v5" stroke="#3a4a8a" stroke-width=".8"/>
</svg>
<div class="t" style="left:287px;top:117px;font-weight:bold;font-size:11px;font-family:'DejaVu Sans','Liberation Sans',sans-serif">5</div>
<div class="t" style="left:327px;top:117px;font-weight:bold;font-size:11px;font-family:'DejaVu Sans','Liberation Sans',sans-serif">10</div>
<div class="t" style="left:367px;top:117px;font-weight:bold;font-size:11px;font-family:'DejaVu Sans','Liberation Sans',sans-serif">15</div>
<div class="t" style="left:407px;top:117px;font-weight:bold;font-size:11px;font-family:'DejaVu Sans','Liberation Sans',sans-serif">20</div>
<div class="t" style="left:447px;top:117px;font-weight:bold;font-size:11px;font-family:'DejaVu Sans','Liberation Sans',sans-serif">25</div>
<div class="t" style="left:487px;top:117px;font-weight:bold;font-size:11px;font-family:'DejaVu Sans','Liberation Sans',sans-serif">30</div>
<div class="t" style="left:527px;top:117px;font-weight:bold;font-size:11px;font-family:'DejaVu Sans','Liberation Sans',sans-serif">35</div>
<div class="t" style="left:567px;top:117px;font-weight:bold;font-size:11px;font-family:'DejaVu Sans','Liberation Sans',sans-serif">40</div>
<div class="t" style="left:607px;top:117px;font-weight:bold;font-size:11px;font-family:'DejaVu Sans','Liberation Sans',sans-serif">45</div>
<div class="t" style="left:647px;top:117px;font-weight:bold;font-size:11px;font-family:'DejaVu Sans','Liberation Sans',sans-serif">50</div>
<div class="t" style="left:687px;top:117px;font-weight:bold;font-size:11px;font-family:'DejaVu Sans','Liberation Sans',sans-serif">55</div>
<div class="t" style="left:727px;top:117px;font-weight:bold;font-size:11px;font-family:'DejaVu Sans','Liberation Sans',sans-serif">60</div>
<div class="t" style="left:257px;top:117px;font-weight:bold;font-size:11px;font-family:'DejaVu Sans',sans-serif">1</div>
<div class="a" style="left:257px;top:246px;width:16px;height:18px;border:1px solid #fff;border-right-color:#aca899;border-bottom-color:#aca899;background:#ece9d8"></div>
<div class="a" style="left:279px;top:246px;width:16px;height:18px;border:1px solid #fff;border-right-color:#aca899;border-bottom-color:#aca899;background:#ece9d8"></div>
<div class="a" style="left:296px;top:246px;width:16px;height:18px;border:1px solid #fff;border-right-color:#aca899;border-bottom-color:#aca899;background:#ece9d8"></div>
<div class="a" style="left:317px;top:246px;width:16px;height:18px;border:1px solid #fff;border-right-color:#aca899;border-bottom-color:#aca899;background:#ece9d8"></div>
<div class="a" style="left:337px;top:246px;width:16px;height:18px;border:1px solid #fff;border-right-color:#aca899;border-bottom-color:#aca899;background:#ece9d8"></div>
<div class="a" style="left:360px;top:246px;width:40px;height:18px;border:1px solid #aca899;border-right-color:#fff;border-bottom-color:#fff;background:#e7e4d4;text-align:center;font-weight:bold;font-size:12px;line-height:16px;font-family:'Liberation Mono',monospace">1</div>
<div class="a" style="left:408px;top:246px;width:70px;height:18px;border:1px solid #aca899;border-right-color:#fff;border-bottom-color:#fff;background:#e7e4d4;text-align:center;font-weight:bold;font-size:12px;line-height:16px;font-family:'Liberation Mono',monospace">12.0 fps</div>
<div class="a" style="left:486px;top:246px;width:54px;height:18px;border:1px solid #aca899;border-right-color:#fff;border-bottom-color:#fff;background:#e7e4d4;text-align:center;font-weight:bold;font-size:12px;line-height:16px;font-family:'Liberation Mono',monospace">0.0s</div>
<svg width="100" height="18" viewBox="257 246 100 18" style="left:257px;top:246px"><path d="M265 248 v14" stroke="#e01010" stroke-width="1"/><path d="M265 252.500 l2 2.500 -2 2.500 -2 -2.500 z" fill="#fff" stroke="#e01010" stroke-width="1"/><rect x="282" y="249.500" width="7" height="7" fill="#b0b0e8" stroke="#6a6ab8"/><rect x="285" y="252.500" width="7" height="7" fill="#8a8ad8" stroke="#5a5ab0"/><rect x="299" y="249.500" width="7" height="7" fill="#fff" stroke="#6a6ab8"/><rect x="302" y="252.500" width="7" height="7" fill="#fff" stroke="#5a5ab0"/><rect x="320" y="249.500" width="7" height="7" fill="#8a8ad8" stroke="#5a5ab0"/><rect x="323" y="252.500" width="7" height="7" fill="#8a8ad8" stroke="#5a5ab0"/><path d="M343 250 h-2.500 v10 h2.500 M347 250 h2.500 v10 h-2.500" fill="none" stroke="#334" stroke-width="1.400"/><rect x="344.200" y="254" width="1.800" height="1.800" fill="#334"/><path d="M346.500 258 h3 v2.500 z" fill="#111"/></svg>
<!--/TL2-->
<!--STAGE-->
<div class="a" style="left:764px;top:136px;width:17px;height:110px;background:#f3f1e7"></div>
<div class="a" style="left:765px;top:138px;width:14px;height:14px;background:linear-gradient(135deg,#cddafc,#b6c8f6);border:1px solid #d2defc;border-radius:2px"></div>
<svg width="14" height="14" viewBox="765 138 14 14" style="left:765px;top:138px"><path d="M768.5 146.5 l3.500 -3.500 l3.500 3.500" fill="none" stroke="#4a62a8" stroke-width="2"/></svg>
<div class="a" style="left:765px;top:153px;width:14px;height:73px;background:linear-gradient(90deg,#cbd9fd,#bccdf9);border:1px solid #d4e0fc;border-radius:2px"></div>
<div class="a" style="left:769.0px;top:185.5px;width:6px;height:7px;background:repeating-linear-gradient(#eef3ff 0,#eef3ff 1px,#9fb4e8 1px,#9fb4e8 2px)"></div>
<div class="a" style="left:765px;top:230px;width:14px;height:15px;background:linear-gradient(135deg,#cddafc,#b6c8f6);border:1px solid #d2defc;border-radius:2px"></div>
<svg width="14" height="15" viewBox="765 230 14 15" style="left:765px;top:230px"><path d="M768.5 236.0 l3.500 3.500 l3.500 -3.500" fill="none" stroke="#4a62a8" stroke-width="2"/></svg>
<div class="a" style="left:547px;top:247px;width:216px;height:17px;background:linear-gradient(#e2dfd2 0,#f6f5ee 2px,#fff 6px,#fff 100%)"></div>
<div class="a" style="left:550px;top:248px;width:13px;height:15px;background:linear-gradient(135deg,#cddafc,#b6c8f6);border:1px solid #d2defc;border-radius:2px"></div>
<svg width="14" height="15" viewBox="548 248 14 15" style="left:549.500px;top:248px"><path d="M556.5 252.0 l-3.500 3.500 l3.500 3.500" fill="none" stroke="#4a62a8" stroke-width="2"/></svg>
<div class="a" style="left:567px;top:248px;width:18px;height:15px;background:linear-gradient(180deg,#cbd9fd,#bccdf9);border:1px solid #d4e0fc;border-radius:2px"></div>
<div class="a" style="left:572.0px;top:252.5px;width:7px;height:6px;background:repeating-linear-gradient(90deg,#eef3ff 0,#eef3ff 1px,#9fb4e8 1px,#9fb4e8 2px)"></div>
<div class="a" style="left:747px;top:248px;width:14px;height:15px;background:linear-gradient(135deg,#cddafc,#b6c8f6);border:1px solid #d2defc;border-radius:2px"></div>
<svg width="14" height="15" viewBox="747 248 14 15" style="left:747px;top:248px"><path d="M752.5 252.0 l3.500 3.500 l-3.500 3.500" fill="none" stroke="#4a62a8" stroke-width="2"/></svg>
<div class="a" style="left:77px;top:264px;width:704px;height:7px;background:linear-gradient(#ece9d8 0,#fbfaf4 1.500px,#fdfcf7 4px,#f4f2e8 5px,#a8a596 6px,#77756a 7px)"></div>
<div class="a" style="left:77px;top:271px;width:688px;height:309px;background:#cecece"></div>
<div class="a" style="left:164px;top:271px;width:549px;height:308px;background:#000;overflow:hidden"></div>
<svg width="549" height="308" viewBox="164 271 549 308" style="left:164px;top:271px;overflow:hidden">
<defs>
<radialGradient id="glow" gradientUnits="userSpaceOnUse" cx="239.500" cy="423" r="158"><stop offset="0" stop-color="#e9e2d9"/><stop offset=".2" stop-color="#cbbdbb"/><stop offset=".43" stop-color="#957880"/><stop offset=".52" stop-color="#82606a"/><stop offset=".62" stop-color="#643646"/><stop offset=".72" stop-color="#41101f"/><stop offset=".82" stop-color="#26020c"/><stop offset=".92" stop-color="#120004"/><stop offset="1" stop-color="#000"/></radialGradient>
<linearGradient id="body" x1="0" x2="1"><stop offset="0" stop-color="#d83030"/><stop offset=".1" stop-color="#dc3c32"/><stop offset=".34" stop-color="#f0a468"/><stop offset=".6" stop-color="#e05038"/><stop offset="1" stop-color="#d42c2c"/></linearGradient>
<linearGradient id="flame" x1="0" y1="1" x2="0" y2="0"><stop offset="0" stop-color="#e4f080"/><stop offset=".12" stop-color="#f6e47a"/><stop offset=".4" stop-color="#f4a460"/><stop offset=".7" stop-color="#e85c3c"/><stop offset="1" stop-color="#de3c30"/></linearGradient>
<linearGradient id="ctop" x1="0" x2="1"><stop offset="0" stop-color="#ee9c56"/><stop offset=".6" stop-color="#f6d480"/><stop offset="1" stop-color="#f4c070"/></linearGradient>
</defs>
<ellipse cx="239.500" cy="423" rx="68.500" ry="157" fill="url(#glow)"/>
<rect x="211" y="421" width="43" height="121" fill="url(#body)"/>
<ellipse cx="232.800" cy="421.200" rx="22" ry="8.600" fill="url(#ctop)" stroke="#8a7466" stroke-width="1.400"/>
<path d="M252.500 329 C240 336 223 345 217 358 C211 372 211 392 218 403 C223 411 228 413.500 232 413.500 C238 413.500 245 405 249 395 C254 382 253 368 249 358 C245 348 246 338 252.500 329 Z" fill="url(#flame)"/>
</svg>
<div class="a" style="left:765px;top:270px;width:16px;height:310px;background:linear-gradient(90deg,#f1efe5,#fdfdfa)"></div>
<div class="a" style="left:766px;top:272px;width:13px;height:14px;background:linear-gradient(135deg,#cddafc,#b6c8f6);border:1px solid #d2defc;border-radius:2px"></div>
<svg width="13" height="14" viewBox="766 272 13 14" style="left:766px;top:272px"><path d="M769.0 280.5 l3.500 -3.500 l3.500 3.500" fill="none" stroke="#4a62a8" stroke-width="2"/></svg>
<div class="a" style="left:766px;top:404px;width:13px;height:44px;background:linear-gradient(90deg,#cbd9fd,#bccdf9);border:1px solid #d4e0fc;border-radius:2px"></div>
<div class="a" style="left:769.5px;top:422.0px;width:6px;height:7px;background:repeating-linear-gradient(#eef3ff 0,#eef3ff 1px,#9fb4e8 1px,#9fb4e8 2px)"></div>
<div class="a" style="left:766px;top:563px;width:13px;height:14px;background:linear-gradient(135deg,#cddafc,#b6c8f6);border:1px solid #d2defc;border-radius:2px"></div>
<svg width="13" height="14" viewBox="766 563 13 14" style="left:766px;top:563px"><path d="M769.0 568.5 l3.500 3.500 l3.500 -3.500" fill="none" stroke="#4a62a8" stroke-width="2"/></svg>
<div class="a" style="left:77px;top:580px;width:688px;height:16px;background:linear-gradient(#f1efe5,#fdfdfa)"></div>
<div class="a" style="left:765px;top:580px;width:16px;height:16px;background:#ece9d8"></div>
<div class="a" style="left:78px;top:581px;width:14px;height:14px;background:linear-gradient(135deg,#cddafc,#b6c8f6);border:1px solid #d2defc;border-radius:2px"></div>
<svg width="14" height="14" viewBox="78 581 14 14" style="left:78px;top:581px"><path d="M86.5 584.5 l-3.500 3.500 l3.500 3.500" fill="none" stroke="#4a62a8" stroke-width="2"/></svg>
<div class="a" style="left:303px;top:581px;width:224px;height:14px;background:linear-gradient(180deg,#cbd9fd,#bccdf9);border:1px solid #d4e0fc;border-radius:2px"></div>
<div class="a" style="left:411.0px;top:585.0px;width:7px;height:6px;background:repeating-linear-gradient(90deg,#eef3ff 0,#eef3ff 1px,#9fb4e8 1px,#9fb4e8 2px)"></div>
<div class="a" style="left:749px;top:581px;width:14px;height:14px;background:linear-gradient(135deg,#cddafc,#b6c8f6);border:1px solid #d2defc;border-radius:2px"></div>
<svg width="14" height="14" viewBox="749 581 14 14" style="left:749px;top:581px"><path d="M754.5 584.5 l3.500 3.500 l-3.500 3.500" fill="none" stroke="#4a62a8" stroke-width="2"/></svg>
<div class="a" style="left:781px;top:378px;width:7px;height:49px;background:#e9e7dc"></div>
<svg width="8" height="12" viewBox="781 396 8 12" style="left:781px;top:396px"><path d="M782.500 398 l4 4 l-4 4 z" fill="#111"/></svg>
<div class="a" style="left:404px;top:596px;width:50px;height:7px;background:#e8e6dc"></div>
<svg width="12" height="8" viewBox="424 596 12 8" style="left:424px;top:596px"><path d="M425.500 597.500 h8 l-4 4 z" fill="#111"/></svg>
<!--/STAGE-->
<!--RIGHT-->
<div class="a" style="left:788px;top:50px;width:208px;height:662px;background:#ece9d8"></div>
<div class="a" style="left:788px;top:50px;width:208px;height:1px;background:#6a6a6a"></div>
<div class="a" style="left:788px;top:51px;width:208px;height:19px;background:linear-gradient(#a8b9d4 0,#b5c5dc 45%,#c9d6e8 100%);border-top:1px solid #dfe7f3;border-bottom:1px solid #94a6c0"></div>
<div class="a" style="left:793px;top:55px;width:4px;height:11px;background-image:radial-gradient(circle at 0.5px 0.5px,#70809c 0.6px,transparent 0.7px);background-size:2px 2px"></div>
<svg width="12" height="10" viewBox="0 0 12 10" style="left:801px;top:57px"><path d="M1 1.500 h9 l-4.500 6 z" fill="#111"/></svg>
<div class="t" style="left:815px;top:54px">颜色</div>
<svg width="16" height="12" viewBox="978 54 16 12" style="left:978px;top:53px"><path d="M980 57 h2 M980 60.500 h2 M980 64 h2" stroke="#222" stroke-width="1.600"/><path d="M984 57 h6 M984 60.500 h6 M984 64 h4" stroke="#222" stroke-width="1.200"/><path d="M988.500 64 h4.500 l-2.250 2.500 z" fill="#222"/></svg>
<div class="a" style="left:788px;top:70px;width:208px;height:19px;background:#9cabc5"></div>
<svg width="60" height="19" viewBox="788 70 60 19" style="left:788px;top:70px"><path d="M788 89 V74 Q788 72 791 72 H829 Q832 72 833.500 75 L841 89 Z" fill="#ece9d8"/></svg>
<div class="t" style="left:795px;top:73px">混色器</div>
<div class="t" style="left:847px;top:73px;color:#fff">颜色样本</div>
<div class="a" style="left:816px;top:95px;width:19px;height:17px;background:#fff;border:1px solid #f8f6ee;box-shadow:1px 1px 0 #b8b4a4"></div>
<div class="a" style="left:792px;top:122px;width:49px;height:23px;background:#fff;border-radius:3px"></div>
<div class="a" style="left:817px;top:126px;width:18px;height:16px;background:radial-gradient(circle at 0% 100%,#d4c4c4 0,#9a7480 30%,#5a2434 60%,#2e0612 100%);border:1px solid #d8d4c8"></div>
<svg width="60" height="80" viewBox="790 92 60 80" style="left:790px;top:92px">
<path d="M799.500 109.500 L800.500 106.500 L808.500 98.500 L811 101 L803 109 Z" fill="#d8d8d8" stroke="#555" stroke-width=".9"/>
<path d="M819.500 109.500 L832 97.500" stroke="#d01030" stroke-width="1.800"/>
<path d="M829.500 108 h5 l-2.500 2.800 z" fill="#111"/>
<path d="M799.3 138.5 Q797.3 132.5 801.0 130.1 Q803.0 129.1 804.0 130.5" fill="none" stroke="#151515" stroke-width="2.200" stroke-linecap="round"/><path d="M801.3 133.1 L806.1 129.9 L809.7 134.1 L804.9 139.1 Z" fill="#f4f4f4" stroke="#222" stroke-width="1"/><path d="M803.1 133.5 L805.9 131.7 L807.9 134.1 L805.1 136.1 Z" fill="#b8b8b8"/><path d="M803.3 131.1 Q803.7 127.1 805.9 127.9 Q807.3 128.7 806.9 130.9" fill="none" stroke="#222" stroke-width="1"/>
<rect x="828" y="137" width="7" height="5" fill="#ece9d8"/><path d="M829.500 138.500 h5 l-2.500 2.800 z" fill="#111"/>
<rect x="795" y="153.500" width="7" height="7" fill="#111"/><rect x="798" y="156.500" width="6.500" height="6.500" fill="#fff" stroke="#111" stroke-width="1.200"/>
<rect x="811.500" y="154" width="9" height="9" fill="#fff" stroke="#111" stroke-width="1.200"/><path d="M812 162.500 L820 154.500" stroke="#d01030" stroke-width="1.600"/>
<rect x="826" y="153.500" width="5" height="4.500" fill="#111"/><rect x="826.500" y="159" width="4" height="4" fill="#fff" stroke="#111" stroke-width="1"/>
<path d="M832 155.500 h3.500 v-1.500 l2.500 2.500 -2.500 2.500 v-1.500 h-3.500 z M838 160.500 h-3.500 v-1.500 l-2.500 2.500 2.500 2.500 v-1.500 h3.500 z" fill="#2a7a9a"/>
</svg>
<div class="t" style="left:877px;top:96px">类型:</div>
<div class="a" style="left:907px;top:92px;width:70px;height:20px;background:#fff;border:1px solid #9fb3d6"></div>
<div class="a" style="left:961px;top:94px;width:14px;height:16px;background:linear-gradient(#cddafd,#b2c6f6);border-radius:2px"></div>
<svg width="14" height="16" viewBox="961 94 14 16" style="left:961px;top:94px"><path d="M964.5 100.5 l3.500 3.500 l3.500 -3.500" fill="none" stroke="#3f5a9a" stroke-width="2"/></svg>
<div class="t" style="left:911px;top:95px">放射状</div>
<div class="t" style="left:877px;top:120px">溢出:</div>
<div class="a" style="left:907px;top:116px;width:70px;height:23px;background:#fff;border:1px solid #9fb3d6"></div>
<div class="a" style="left:961px;top:118px;width:14px;height:19px;background:linear-gradient(#cddafd,#b2c6f6);border-radius:2px"></div>
<svg width="14" height="19" viewBox="961 118 14 19" style="left:961px;top:118px"><path d="M964.5 126.0 l3.500 3.500 l3.500 -3.500" fill="none" stroke="#3f5a9a" stroke-width="2"/></svg>
<div class="a" style="left:910px;top:119px;width:19px;height:17px;background:linear-gradient(90deg,#6c6c6c,#e0e0e0)"></div>
<div class="a" style="left:933px;top:119px;width:0;height:17px;border-left:1px dashed #e02020"></div>
<div class="a" style="left:911px;top:145px;width:12px;height:12px;background:linear-gradient(135deg,#e4e8ee,#fff);border:1px solid #4a6a8a"></div>
<div class="t" style="left:926px;top:144px">线性 <span style="font-size:11px">RGB</span></div>
<div class="t" style="left:790px;width:41px;text-align:right;top:178px">红:</div>
<div class="a" style="left:833px;top:175px;width:42px;height:20px;background:#fff;border:1px solid #9fb3d6"></div>
<div class="t" style="left:837px;top:178px;font-size:11px">236</div>
<div class="a" style="left:876px;top:177px;width:10px;height:16px;background:linear-gradient(#cddafd,#b2c6f6);border-radius:2px"></div>
<svg width="10" height="16" viewBox="876 177 10 16" style="left:876px;top:177px"><path d="M877.5 183.5 l3.500 3.500 l3.500 -3.500" fill="none" stroke="#3f5a9a" stroke-width="2"/></svg>
<div class="t" style="left:790px;width:41px;text-align:right;top:199px">绿:</div>
<div class="a" style="left:833px;top:196px;width:42px;height:20px;background:#fff;border:1px solid #9fb3d6"></div>
<div class="t" style="left:837px;top:199px;font-size:11px">233</div>
<div class="a" style="left:876px;top:198px;width:10px;height:16px;background:linear-gradient(#cddafd,#b2c6f6);border-radius:2px"></div>
<svg width="10" height="16" viewBox="876 198 10 16" style="left:876px;top:198px"><path d="M877.5 204.5 l3.500 3.500 l3.500 -3.500" fill="none" stroke="#3f5a9a" stroke-width="2"/></svg>
<div class="t" style="left:790px;width:41px;text-align:right;top:220px">蓝:</div>
<div class="a" style="left:833px;top:217px;width:42px;height:20px;background:#fff;border:1px solid #9fb3d6"></div>
<div class="t" style="left:837px;top:220px;font-size:11px">216</div>
<div class="a" style="left:876px;top:219px;width:10px;height:16px;background:linear-gradient(#cddafd,#b2c6f6);border-radius:2px"></div>
<svg width="10" height="16" viewBox="876 219 10 16" style="left:876px;top:219px"><path d="M877.5 225.5 l3.500 3.500 l3.500 -3.500" fill="none" stroke="#3f5a9a" stroke-width="2"/></svg>
<div class="t" style="left:790px;width:41px;text-align:right;top:242px;font-size:11px">Alpha:</div>
<div class="a" style="left:833px;top:239px;width:42px;height:20px;background:#fff;border:1px solid #9fb3d6"></div>
<div class="t" style="left:837px;top:242px;font-size:11px">100%</div>
<div class="a" style="left:876px;top:241px;width:10px;height:16px;background:linear-gradient(#cddafd,#b2c6f6);border-radius:2px"></div>
<svg width="10" height="16" viewBox="876 241 10 16" style="left:876px;top:241px"><path d="M877.5 247.5 l3.500 3.500 l3.500 -3.500" fill="none" stroke="#3f5a9a" stroke-width="2"/></svg>
<div class="a" style="left:895px;top:173px;width:61px;height:61px;background:linear-gradient(rgba(100,96,96,0),#646060),linear-gradient(90deg,#f00,#ff0 17%,#0f0 33%,#0ff 50%,#00f 67%,#f0f 83%,#f00);border:1px solid #aca899"></div>
<svg width="12" height="12" viewBox="0 0 12 12" style="left:898px;top:208px"><path d="M6 0 v12 M0 6 h12" stroke="#fff" stroke-width="1.600"/><path d="M6 1 v10 M1 6 h10" stroke="#444" stroke-width=".6"/></svg>
<div class="a" style="left:962px;top:173px;width:19px;height:61px;background:linear-gradient(#fff,#8a8562 50%,#000);border:1px solid #aca899"></div>
<svg width="8" height="12" viewBox="0 0 8 12" style="left:982px;top:174px"><path d="M6.500 1 v10 l-5.500 -5 z" fill="#111"/></svg>
<div class="a" style="left:893px;top:238px;width:63px;height:21px;background:#fff;border:1px solid #9fb3d6"></div>
<div class="t" style="left:898px;top:241px;font-size:11px">#ECE9D8</div>
<div class="a" style="left:792px;top:265px;width:192px;height:11px;background:linear-gradient(90deg,#ece9d8 0,#3a0612 75%,#000 100%);border-top:1px solid #111;border-left:1px solid #111"></div>
<svg width="10" height="14" viewBox="0 0 10 14" style="left:789px;top:276px"><path d="M5 .5 L9.500 5 V13.500 H.5 V5 Z" fill="#fff" stroke="#111" stroke-width="1"/><path d="M5 .5 L9.500 5 H.5 Z" fill="#111" stroke="#111" stroke-width="1"/><rect x="2.500" y="7" width="5" height="5" fill="#ece9d8"/></svg>
<svg width="10" height="14" viewBox="0 0 10 14" style="left:933px;top:276px"><path d="M5 .5 L9.500 5 V13.500 H.5 V5 Z" fill="#fff" stroke="#111" stroke-width="1"/><path d="M5 .5 L9.500 5 H.5 Z" fill="#fff" stroke="#111" stroke-width="1"/><rect x="2.500" y="7" width="5" height="5" fill="#3a0612"/></svg>
<svg width="10" height="14" viewBox="0 0 10 14" style="left:979px;top:276px"><path d="M5 .5 L9.500 5 V13.500 H.5 V5 Z" fill="#fff" stroke="#111" stroke-width="1"/><path d="M5 .5 L9.500 5 H.5 Z" fill="#fff" stroke="#111" stroke-width="1"/><rect x="2.500" y="7" width="5" height="5" fill="#000"/></svg>
<div class="a" style="left:792px;top:291px;width:198px;height:40px;background:radial-gradient(ellipse 56% 62% at 50% 50%,#efe9dc 0,#cfc2bf 22%,#957880 46%,#6a3a48 64%,#400a1a 80%,#1a0008 100%)"></div>
<div class="a" style="left:788px;top:344px;width:208px;height:19px;background:linear-gradient(#a8b9d4 0,#b5c5dc 45%,#c9d6e8 100%);border-top:1px solid #dfe7f3;border-bottom:1px solid #94a6c0"></div>
<div class="a" style="left:793px;top:348px;width:4px;height:11px;background-image:radial-gradient(circle at 0.5px 0.5px,#70809c 0.6px,transparent 0.7px);background-size:2px 2px"></div>
<svg width="10" height="12" viewBox="0 0 10 12" style="left:803px;top:347.5px"><path d="M1.500 1 v9 l6 -4.500 z" fill="#111"/></svg>
<div class="t" style="left:815px;top:347px"><span style="word-spacing:1.500px">对齐 &amp; 信息 &amp; 变形</span></div>
<div class="a" style="left:788px;top:364px;width:208px;height:18px;background:linear-gradient(#a8b9d4 0,#b5c5dc 45%,#c9d6e8 100%);border-top:1px solid #dfe7f3;border-bottom:1px solid #94a6c0"></div>
<div class="a" style="left:793px;top:368px;width:4px;height:10px;background-image:radial-gradient(circle at 0.5px 0.5px,#70809c 0.6px,transparent 0.7px);background-size:2px 2px"></div>
<svg width="10" height="12" viewBox="0 0 10 12" style="left:803px;top:367.5px"><path d="M1.500 1 v9 l6 -4.500 z" fill="#111"/></svg>
<div class="t" style="left:815px;top:367px">库</div>
<!--/RIGHT-->
<!--BOTTOM-->
<div class="a" style="left:77px;top:603px;width:704px;height:19px;background:linear-gradient(#a8b9d4 0,#b5c5dc 45%,#c9d6e8 100%);border-top:1px solid #dfe7f3;border-bottom:1px solid #94a6c0"></div>
<div class="a" style="left:82px;top:607px;width:4px;height:12px;background-image:radial-gradient(circle at 0.5px 0.5px,#70809c 0.6px,transparent 0.7px);background-size:2px 2px"></div>
<svg width="10" height="12" viewBox="0 0 10 12" style="left:91px;top:607px"><path d="M1.500 1 v9 l6 -4.500 z" fill="#111"/></svg>
<div class="t" style="left:103px;top:606px">动作</div>
<div class="a" style="left:77px;top:622px;width:704px;height:2px;background:#dce4f0"></div>
<div class="a" style="left:77px;top:624px;width:704px;height:18px;background:linear-gradient(#b4c6e0 0,#c0d0e6 50%,#d2deee 100%);border-top:1px solid #e4ebf5"></div>
<div class="a" style="left:82px;top:629px;width:4px;height:12px;background-image:radial-gradient(circle at 0.5px 0.5px,#70809c 0.6px,transparent 0.7px);background-size:2px 2px"></div>
<svg width="12" height="10" viewBox="0 0 12 10" style="left:89px;top:629px"><path d="M1 1.500 h9 l-4.500 6 z" fill="#111"/></svg>
<svg width="50" height="19" viewBox="104 624 50 19" style="left:104px;top:624px"><path d="M106 642 V628.500 Q106 626 109 626 H132 Q135 626 136.500 629 L143.500 642 Z" fill="#ece9d8"/></svg>
<div class="t" style="left:112px;top:627px">属性</div>
<div class="t" style="left:153px;top:627px">滤镜</div>
<div class="a" style="left:185px;top:628px;width:1px;height:12px;background:#7a8aa4"></div>
<div class="t" style="left:193px;top:627px">参数</div>
<svg width="16" height="12" viewBox="978 54 16 12" style="left:763px;top:626px"><path d="M980 57 h2 M980 60.500 h2 M980 64 h2" stroke="#222" stroke-width="1.600"/><path d="M984 57 h6 M984 60.500 h6 M984 64 h4" stroke="#222" stroke-width="1.200"/><path d="M988.500 64 h4.500 l-2.250 2.500 z" fill="#222"/></svg>
<div class="a" style="left:77px;top:642px;width:704px;height:70px;background:#ece9d8"></div>
<div class="a" style="left:245px;top:648px;width:2px;height:64px;border-left:1px solid #9a968a;border-right:1px solid #fff"></div>
<div class="a" style="left:77px;top:703px;width:686px;height:2px;border-top:1px solid #b0ac9c;border-bottom:1px solid #fff"></div>
<svg width="20" height="20" viewBox="0 0 20 20" style="left:95px;top:660px"><defs><radialGradient id="ov" cx=".4" cy=".35" r=".7"><stop offset="0" stop-color="#fff"/><stop offset="1" stop-color="#c8d0e0"/></radialGradient></defs><circle cx="10" cy="10" r="6.800" fill="url(#ov)" stroke="#666" stroke-width="1.400"/></svg>
<div class="t" style="left:127px;top:661px">椭圆</div>
<div class="t" style="left:127px;top:675px">工具</div>
<div class="a" style="left:275px;top:649px;width:20px;height:18px;background:#fff;border:1px solid #f8f6ee;box-shadow:1px 1px 0 #b8b4a4"></div>
<div class="a" style="left:275px;top:678px;width:20px;height:17px;background:radial-gradient(circle at 0% 100%,#d4c4c4 0,#9a7480 30%,#5a2434 60%,#2e0612 100%);border:1px solid #f0eee4;box-shadow:1px 1px 0 #b8b4a4"></div>
<svg width="50" height="52" viewBox="254 648 50 52" style="left:254px;top:648px">
<path d="M257 663 L258 660 L266 652 L268.500 654.500 L260.500 662.500 Z" fill="#555" stroke="#222" stroke-width=".8"/>
<path d="M278 665 L292 651.500" stroke="#d01030" stroke-width="1.800"/>
<path d="M289 664 h5 l-2.500 2.800 z" fill="#111"/>
<path d="M257.3 691.5 Q255.3 685.5 259.0 683.1 Q261.0 682.1 262.0 683.5" fill="none" stroke="#151515" stroke-width="2.200" stroke-linecap="round"/><path d="M259.3 686.1 L264.1 682.9 L267.7 687.1 L262.9 692.1 Z" fill="#d4dcf4" stroke="#222" stroke-width="1"/><path d="M261.1 686.5 L263.9 684.7 L265.9 687.1 L263.1 689.1 Z" fill="#b8b8b8"/><path d="M261.3 684.1 Q261.7 680.1 263.9 680.9 Q265.3 681.7 264.9 683.9" fill="none" stroke="#222" stroke-width="1"/>
<rect x="287.500" y="689.500" width="7.500" height="5.500" fill="#ece9d8"/><path d="M289 691 h5 l-2.500 2.800 z" fill="#111"/>
</svg>
<div class="a" style="left:307px;top:648px;width:42px;height:22px;background:#fff;border:1px solid #9fb3d6"></div>
<div class="t" style="left:312px;top:652px;font-size:11px">1</div>
<div class="a" style="left:353px;top:650px;width:11px;height:18px;background:linear-gradient(#cddafd,#b2c6f6);border-radius:2px"></div>
<svg width="11" height="18" viewBox="353 650 11 18" style="left:353px;top:650px"><path d="M355.0 657.5 l3.500 3.500 l3.500 -3.500" fill="none" stroke="#3f5a9a" stroke-width="2"/></svg>
<div class="a" style="left:367px;top:648px;width:168px;height:23px;background:#fff;border:1px solid #9fb3d6"></div>
<div class="a" style="left:519px;top:650px;width:14px;height:19px;background:linear-gradient(#cddafd,#b2c6f6);border-radius:2px"></div>
<svg width="13" height="18" viewBox="518 650 13 18" style="left:519.500px;top:650.500px"><path d="M521.0 657.5 l3.500 3.500 l3.500 -3.500" fill="none" stroke="#3f5a9a" stroke-width="2"/></svg>
<div class="t" style="left:371px;top:652px">实线</div>
<div class="a" style="left:397px;top:659px;width:119px;height:3px;background:#111"></div>
<div class="a" style="left:545px;top:650px;width:69px;height:21px;background:linear-gradient(#fff,#f2f0e6 80%,#dcd8c8);border:1px solid #2a4a7a;border-radius:3px;box-shadow:inset 0 0 0 1px #c4d4f0"></div>
<div class="t" style="left:557px;top:654px">自定义...</div>
<div class="t" style="left:624px;top:652px">端点:</div>
<div class="t" style="left:624px;top:680px">接合:</div>
<svg width="24" height="50" viewBox="656 650 24 50" style="left:656px;top:650px">
<rect x="659.500" y="656" width="15" height="5.500" rx="2.700" fill="#fff" stroke="#222" stroke-width="1.100"/><path d="M662 658.800 h10" stroke="#555" stroke-width=".8"/>
<path d="M674 666 h5 l-2.500 2.800 z" fill="#111"/>
<path d="M661.500 686 L668 681 L674.500 686 M663.500 689 L668 685.500 L672.500 689 M666 691.500 L668 690 L670 691.500" fill="none" stroke="#222" stroke-width="1.100"/>
<path d="M674 695 h5 l-2.500 2.800 z" fill="#111"/>
</svg>
<svg width="16" height="16" viewBox="0 0 16 16" style="left:762px;top:646px"><circle cx="8" cy="8" r="6" fill="#fff" stroke="#222" stroke-width="1.200"/><text x="8" y="11.500" text-anchor="middle" font-family="Liberation Sans,sans-serif" font-weight="bold" font-size="10" fill="#111">?</text></svg>
<div class="a" style="left:307px;top:680px;width:14px;height:14px;background:linear-gradient(135deg,#e4e8ee,#fff);border:1px solid #4a6a8a"></div>
<div class="t" style="left:323px;top:681px">笔触提示</div>
<div class="t" style="left:422px;top:681px">缩放:</div>
<div class="a" style="left:455px;top:677px;width:80px;height:24px;background:#fff;border:1px solid #9fb3d6"></div>
<div class="a" style="left:519px;top:679px;width:14px;height:20px;background:linear-gradient(#cddafd,#b2c6f6);border-radius:2px"></div>
<svg width="13" height="18" viewBox="518 680 13 18" style="left:519.500px;top:680px"><path d="M521.0 687.5 l3.500 3.500 l3.500 -3.500" fill="none" stroke="#3f5a9a" stroke-width="2"/></svg>
<div class="t" style="left:460px;top:682px">一般</div>
<div class="t" style="left:547px;top:681px">尖角:</div>
<div class="a" style="left:577px;top:678px;width:37px;height:20px;background:#ece9d8;border:1px solid #a8b8d0"></div>
<div class="t" style="left:581px;top:681px;color:#b4b0a0;font-size:11px">3</div>
<div class="a" style="left:781px;top:682px;width:7px;height:30px;background:#ece9d8"></div><div class="a" style="left:768px;top:681px;width:22px;height:9px;background:linear-gradient(180deg,#fff 30%,#ece9d8 100%)"></div><div class="a" style="left:768px;top:681px;width:5px;height:18px;background:linear-gradient(90deg,#fbfaf6,#ece9d8)"></div>
<!--/BOTTOM-->
<!--TITLE-->
<svg width="20" height="20" viewBox="0 0 20 20" style="left:5px;top:5px"><defs><radialGradient id="fl" cx=".4" cy=".35" r=".7"><stop offset="0" stop-color="#f85030"/><stop offset=".7" stop-color="#e02810"/><stop offset="1" stop-color="#a01808"/></radialGradient></defs><circle cx="9.500" cy="10.500" r="8" fill="url(#fl)" stroke="#8a2818" stroke-width=".8"/><path d="M12.800 6 Q10 5.500 9.300 9 L8.900 10.500 H11.500 M8.900 10.500 H7.300 M8.900 10.500 Q8.300 14.500 5.500 15" fill="none" stroke="#fff" stroke-width="1.700" stroke-linecap="round"/></svg>
<div class="wb" style="left:927px;background:linear-gradient(135deg,#5a7ae8,#3a5cd6 60%,#4668de);border-color:#a8b8f4"></div>
<div class="wb" style="left:950px;background:linear-gradient(135deg,#5a7ae8,#3a5cd6 60%,#4668de);border-color:#a8b8f4"></div>
<div class="wb" style="left:973px;background:linear-gradient(135deg,#d07880,#c06068 60%,#c46a70);border-color:#e0a8b0"></div>
<svg width="70" height="22" viewBox="927 6 70 22" style="left:927px;top:6px"><rect x="932" y="19" width="7" height="3" fill="#fff"/><path d="M955.500 12.500 h10 v9 h-10 z" fill="none" stroke="#fff" stroke-width="1.400"/><path d="M955 12.500 h11" stroke="#fff" stroke-width="3"/><path d="M978.500 11.500 l10 10 m0 -10 l-10 10" stroke="#fff" stroke-width="2.200"/></svg>
<!--/TITLE-->
<!--MORE-->
</body>
</html>
